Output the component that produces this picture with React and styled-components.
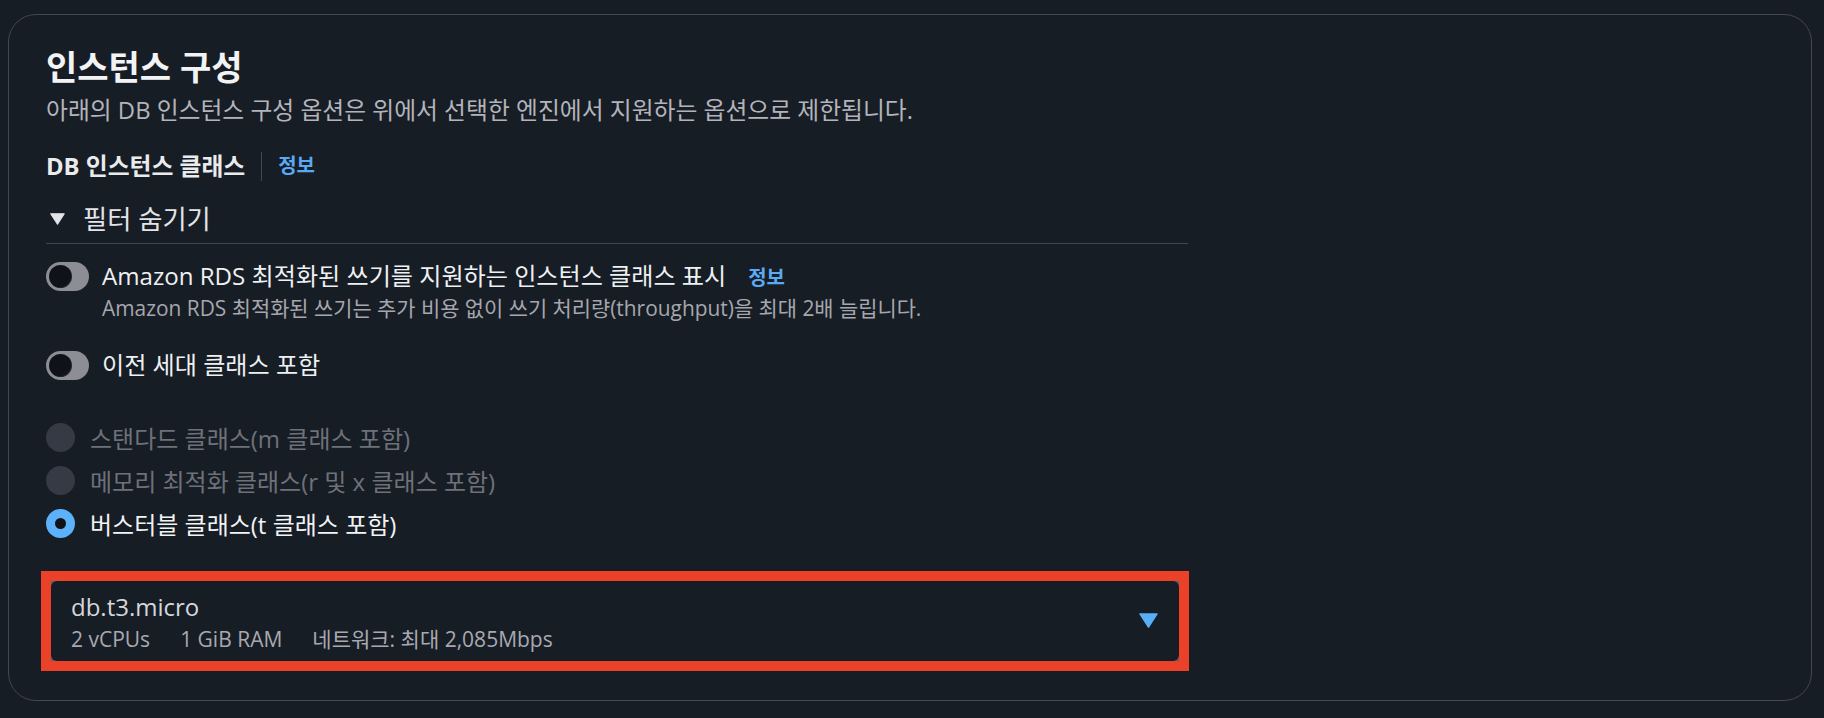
import React from "react";
import styled, { createGlobalStyle } from "styled-components";

const GlobalStyle = createGlobalStyle`
  html, body {
    margin: 0;
    padding: 0;
    background: #171d25;
  }
  body {
    font-family: "Open Sans", "Noto Sans CJK KR", sans-serif;
    color: #e9ebed;
    -webkit-font-smoothing: antialiased;
  }
  * { box-sizing: border-box; }
`;

const Page = styled.div`
  padding: 14px 12px 18px 8px;
`;

const Card = styled.section`
  border: 1px solid #444851;
  border-radius: 28px;
  background: #171d25;
  padding: 32px 37px 29px 37px;
`;

const Column = styled.div`
  display: flex;
  flex-direction: column;
  width: 1142px;
`;

const Title = styled.h2`
  margin: 0;
  font-size: 34px;
  line-height: 40px;
  font-weight: 700;
  color: #f2f3f5;
`;

const Description = styled.p`
  margin: 8px 0 0;
  font-size: 23.8px;
  line-height: 30px;
  color: #b3b4bb;
`;

const LabelRow = styled.div`
  margin-top: 26px;
  display: flex;
  align-items: center;
  height: 30px;
  gap: 16px;
`;

const FieldLabel = styled.span`
  font-size: 23.8px;
  line-height: 30px;
  font-weight: 700;
  color: #e9ebed;
`;

const Separator = styled.span`
  width: 1px;
  height: 29px;
  background: #434750;
`;

const InfoLink = styled.a`
  font-size: 20px;
  line-height: 30px;
  font-weight: 700;
  color: #5aaaf3;
  text-decoration: none;
  margin-left: ${(p) => p.$gap || 0}px;
`;

const FilterHeader = styled.div`
  margin-top: 21px;
  display: flex;
  align-items: center;
  gap: 18px;
  padding-left: 4px;
  font-size: 26.3px;
  line-height: 34px;
  color: #e3e4e8;
`;

const Divider = styled.div`
  margin-top: 7px;
  height: 1px;
  background: #414650;
`;

const ToggleRow = styled.div`
  margin-top: ${(p) => p.$top}px;
  display: flex;
  align-items: flex-start;
  gap: 13px;
`;

const Track = styled.span`
  flex: none;
  margin-top: 1px;
  width: 43px;
  height: 29px;
  border-radius: 15px;
  background: #8d8d95;
  position: relative;
`;

const Knob = styled.span`
  position: absolute;
  left: 3px;
  top: 3px;
  width: 23px;
  height: 23px;
  border-radius: 50%;
  background: #0f1319;
  box-shadow: inset -1px -1px 0 rgba(255, 255, 255, 0.08);
`;

const ToggleText = styled.div`
  display: flex;
  flex-direction: column;
`;

const ToggleLabel = styled.div`
  font-size: 24.1px;
  line-height: 30px;
  color: #eef0f2;
`;

const ToggleDesc = styled.div`
  margin-top: 1px;
  font-size: 20.9px;
  line-height: 28px;
  color: #a6a7ae;
`;

const RadioGroup = styled.div`
  margin-top: 36px;
  display: flex;
  flex-direction: column;
`;

const RadioRow = styled.label`
  height: 43px;
  display: flex;
  align-items: center;
  gap: 15px;
  font-size: 24px;
  color: ${(p) => (p.$disabled ? "#6e7179" : "#f2f3f5")};
`;

const RadioDot = styled.span`
  flex: none;
  width: 29px;
  height: 29px;
  border-radius: 50%;
  background: ${(p) => (p.$checked ? "#5cb1f8" : "#353a44")};
  display: flex;
  align-items: center;
  justify-content: center;
  &::after {
    content: "";
    display: ${(p) => (p.$checked ? "block" : "none")};
    width: 11px;
    height: 11px;
    border-radius: 50%;
    background: #0f1319;
  }
`;

const Highlight = styled.div`
  margin: 26px -1px 0 -5px;
  border: 10px solid #ea4128;
  background: #5d626b;
`;

const Select = styled.div`
  height: 80px;
  border-radius: 6px;
  background: #171d25;
  display: flex;
  align-items: center;
  justify-content: space-between;
  padding: 0 21px 0 20px;
`;

const SelectText = styled.div`
  display: flex;
  flex-direction: column;
  margin-top: 1px;
`;

const SelectValue = styled.div`
  font-size: 24px;
  line-height: 30px;
  color: #d6d7dc;
`;

const SelectMeta = styled.div`
  margin-top: 4px;
  display: flex;
  gap: 30px;
  font-size: 21px;
  line-height: 26px;
  color: #a8a9b0;
`;

const Caret = ({ size, color }) => (
  <svg width={size} height={size * 0.8} viewBox="0 0 20 16" aria-hidden="true">
    <polygon points="1,1 19,1 10,15" fill={color} stroke={color} strokeWidth="1.5" strokeLinejoin="round" />
  </svg>
);

const Toggle = () => (
  <Track>
    <Knob />
  </Track>
);

const radios = [
  { label: "스탠다드 클래스(m 클래스 포함)", disabled: true },
  { label: "메모리 최적화 클래스(r 및 x 클래스 포함)", disabled: true },
  { label: "버스터블 클래스(t 클래스 포함)", checked: true },
];

export default function App() {
  return (
    <>
      <GlobalStyle />
      <Page>
        <Card>
          <Column>
            <Title>인스턴스 구성</Title>
            <Description>
              아래의 DB 인스턴스 구성 옵션은 위에서 선택한 엔진에서 지원하는 옵션으로 제한됩니다.
            </Description>
            <LabelRow>
              <FieldLabel>DB 인스턴스 클래스</FieldLabel>
              <Separator />
              <InfoLink href="#">정보</InfoLink>
            </LabelRow>
            <FilterHeader>
              <Caret size={15} color="#e3e4e8" />
              <span>필터 숨기기</span>
            </FilterHeader>
            <Divider />
            <ToggleRow $top={17}>
              <Toggle />
              <ToggleText>
                <ToggleLabel>
                  Amazon RDS 최적화된 쓰기를 지원하는 인스턴스 클래스 표시
                  <InfoLink href="#" $gap={22}>정보</InfoLink>
                </ToggleLabel>
                <ToggleDesc>
                  Amazon RDS 최적화된 쓰기는 추가 비용 없이 쓰기 처리량(throughput)을 최대 2배 늘립니다.
                </ToggleDesc>
              </ToggleText>
            </ToggleRow>
            <ToggleRow $top={28}>
              <Toggle />
              <ToggleText>
                <ToggleLabel>이전 세대 클래스 포함</ToggleLabel>
              </ToggleText>
            </ToggleRow>
            <RadioGroup>
              {radios.map((r) => (
                <RadioRow key={r.label} $disabled={r.disabled}>
                  <RadioDot $checked={r.checked} />
                  {r.label}
                </RadioRow>
              ))}
            </RadioGroup>
            <Highlight>
              <Select>
                <SelectText>
                  <SelectValue>db.t3.micro</SelectValue>
                  <SelectMeta>
                    <span>2 vCPUs</span>
                    <span>1 GiB RAM</span>
                    <span>네트워크: 최대 2,085Mbps</span>
                  </SelectMeta>
                </SelectText>
                <Caret size={19} color="#58aef7" />
              </Select>
            </Highlight>
          </Column>
        </Card>
      </Page>
    </>
  );
}
